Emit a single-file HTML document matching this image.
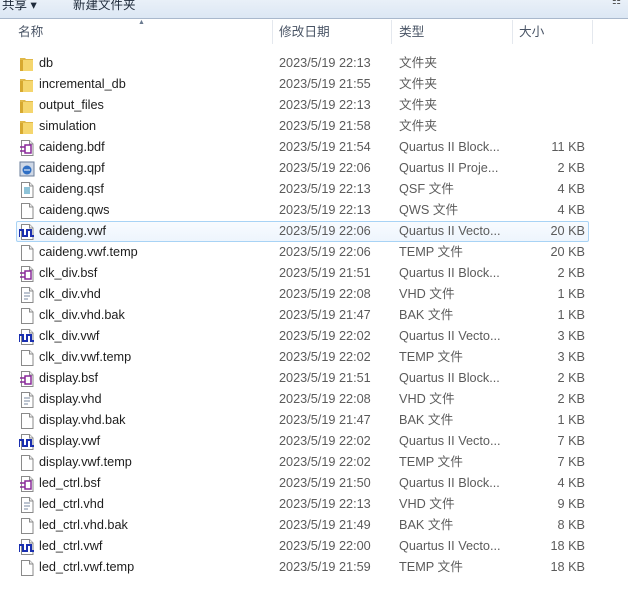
<!DOCTYPE html><html><head><meta charset="utf-8"><style>
body{margin:0;width:628px;height:598px;background:#fff;position:relative;overflow:hidden;font-family:"Liberation Sans","Noto Sans CJK SC",sans-serif;font-size:12.7px;}
.tb{position:absolute;left:0;top:0;width:628px;height:18px;background:linear-gradient(#e9f0f8,#dce7f4);border-bottom:1px solid #a9b8cc;}
.tb span{position:absolute;top:-6px;color:#1e2a3a;font-size:12.5px}
.hd{position:absolute;top:20px;height:24px;line-height:24px;color:#4a5566}
.dv{position:absolute;top:20px;width:1px;height:24px;background:#e4e8ee}
.r{position:absolute;left:0;width:628px;height:21px;line-height:21px}
.r span{position:absolute;white-space:nowrap}
.n{left:39px;color:#1e1e1e}.d{left:279px;color:#5b5b5b}.t{left:399px;color:#5b5b5b}.s{right:43px;color:#5b5b5b}
.ic{position:absolute;left:19px;top:3px;width:16px;height:16px}
.sel{position:absolute;left:16px;top:221px;width:571px;height:19px;border:1px solid #a8d3f5;border-radius:2px;background:linear-gradient(#f8fbfe,#eef5fd)}
</style></head><body>
<div class="tb"><span style="left:2px">共享 ▾</span><span style="left:73px">新建文件夹</span><span style="left:612px;top:-4px;font-size:10px;color:#555">☷</span></div>
<div class="hd" style="left:18px">名称</div><div class="hd" style="left:279px">修改日期</div><div class="hd" style="left:399px">类型</div><div class="hd" style="left:519px">大小</div>
<div style="position:absolute;left:138px;top:19px;font-size:7px;color:#6a7a90">▲</div>
<div class="dv" style="left:272px"></div><div class="dv" style="left:391px"></div><div class="dv" style="left:512px"></div><div class="dv" style="left:592px"></div>
<div class="sel"></div>
<svg width="0" height="0" style="position:absolute"><defs>
<g id="fo"><path d="M1 2h5l1 1h7v12H1z" fill="#e0b848"/><path d="M1 4h13v11H1z" fill="#f5d66e"/><path d="M1 4h3v11H1z" fill="#d7a930"/></g>
<g id="fi"><path d="M2.5 .5h8l3.5 3.5v11.5h-11.5z" fill="#fff" stroke="#8a8a8a"/><path d="M10.5 .5v3.5h3.5" fill="#eee" stroke="#8a8a8a"/></g>
</defs></svg>
<div id="rows"></div>
<script>
var R=[["db","2023/5/19 22:13","文件夹","","fo"],["incremental_db","2023/5/19 21:55","文件夹","","fo"],["output_files","2023/5/19 22:13","文件夹","","fo"],["simulation","2023/5/19 21:58","文件夹","","fo"],
["caideng.bdf","2023/5/19 21:54","Quartus II Block...","11 KB","b"],["caideng.qpf","2023/5/19 22:06","Quartus II Proje...","2 KB","q"],["caideng.qsf","2023/5/19 22:13","QSF 文件","4 KB","qs"],["caideng.qws","2023/5/19 22:13","QWS 文件","4 KB","f"],
["caideng.vwf","2023/5/19 22:06","Quartus II Vecto...","20 KB","v"],["caideng.vwf.temp","2023/5/19 22:06","TEMP 文件","20 KB","f"],["clk_div.bsf","2023/5/19 21:51","Quartus II Block...","2 KB","b"],["clk_div.vhd","2023/5/19 22:08","VHD 文件","1 KB","h"],
["clk_div.vhd.bak","2023/5/19 21:47","BAK 文件","1 KB","f"],["clk_div.vwf","2023/5/19 22:02","Quartus II Vecto...","3 KB","v"],["clk_div.vwf.temp","2023/5/19 22:02","TEMP 文件","3 KB","f"],["display.bsf","2023/5/19 21:51","Quartus II Block...","2 KB","b"],
["display.vhd","2023/5/19 22:08","VHD 文件","2 KB","h"],["display.vhd.bak","2023/5/19 21:47","BAK 文件","1 KB","f"],["display.vwf","2023/5/19 22:02","Quartus II Vecto...","7 KB","v"],["display.vwf.temp","2023/5/19 22:02","TEMP 文件","7 KB","f"],
["led_ctrl.bsf","2023/5/19 21:50","Quartus II Block...","4 KB","b"],["led_ctrl.vhd","2023/5/19 22:13","VHD 文件","9 KB","h"],["led_ctrl.vhd.bak","2023/5/19 21:49","BAK 文件","8 KB","f"],["led_ctrl.vwf","2023/5/19 22:00","Quartus II Vecto...","18 KB","v"],["led_ctrl.vwf.temp","2023/5/19 21:59","TEMP 文件","18 KB","f"]];
var I={fo:'<use href="#fo"/>',f:'<use href="#fi"/>',
v:'<use href="#fi"/><path d="M0 13V6h4v6h4V6h4v6h3" fill="none" stroke="#1a2fb0" stroke-width="2"/>',
b:'<use href="#fi"/><rect x="6" y="5" width="6" height="8" fill="none" stroke="#8a2a9a" stroke-width="1.5"/><path d="M1 7h5M1 11h5" stroke="#8a2a9a" stroke-width="1.5"/>',
q:'<rect x="1" y="1" width="14" height="14" fill="#cfd8e6" stroke="#6a7d99"/><circle cx="8" cy="9" r="4.5" fill="#2f6fc4"/><path d="M5 9h6" stroke="#fff"/>',
qs:'<use href="#fi"/><rect x="5" y="5" width="6" height="7" fill="#8ec3d8"/>',
h:'<use href="#fi"/><path d="M5 6h6M5 9h6M5 12h4" stroke="#7a8aa0"/>'};
var h='';R.forEach(function(r,i){h+='<div class="r" style="top:'+(52.5+i*21)+'px"><svg class="ic" viewBox="0 0 16 16">'+I[r[4]]+'</svg><span class="n">'+r[0]+'</span><span class="d">'+r[1]+'</span><span class="t">'+r[2]+'</span><span class="s">'+r[3]+'</span></div>';});
document.getElementById('rows').innerHTML=h;
</script>
</body></html>
